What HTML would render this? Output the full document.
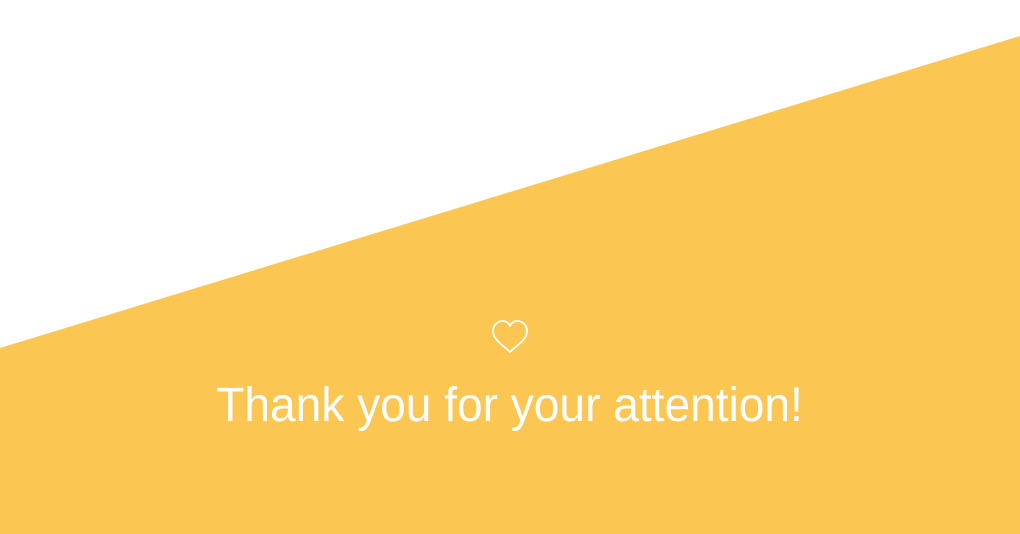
<!DOCTYPE html>
<html><head><meta charset="utf-8"><style>
html,body{margin:0;padding:0;width:1020px;height:534px;overflow:hidden;background:#fff;}
svg{position:absolute;left:0;top:0;}
.t{position:absolute;left:0;width:1020px;top:376px;text-align:center;color:#fff;font-family:"Liberation Sans",sans-serif;font-size:48px;font-weight:300;line-height:60px;}
.t span{display:inline-block;transform:scaleX(0.96);transform-origin:center;}
</style></head><body>
<svg width="1020" height="534" viewBox="0 0 1020 534">
<polygon points="0,348 1020,36 1020,534 0,534" fill="#FCC652"/>
<path d="M510,352 C504,346 493,340 493,331 C493,325 498,321 503,321 C506,321 509,323 510,326 C511,323 514,321 517,321 C522,321 527,325 527,331 C527,340 516,346 510,352 Z" fill="none" stroke="#fff" stroke-width="1.8" stroke-linejoin="round"/>
</svg>
<div class="t"><span>Thank you for your attention!</span></div>
</body></html>
